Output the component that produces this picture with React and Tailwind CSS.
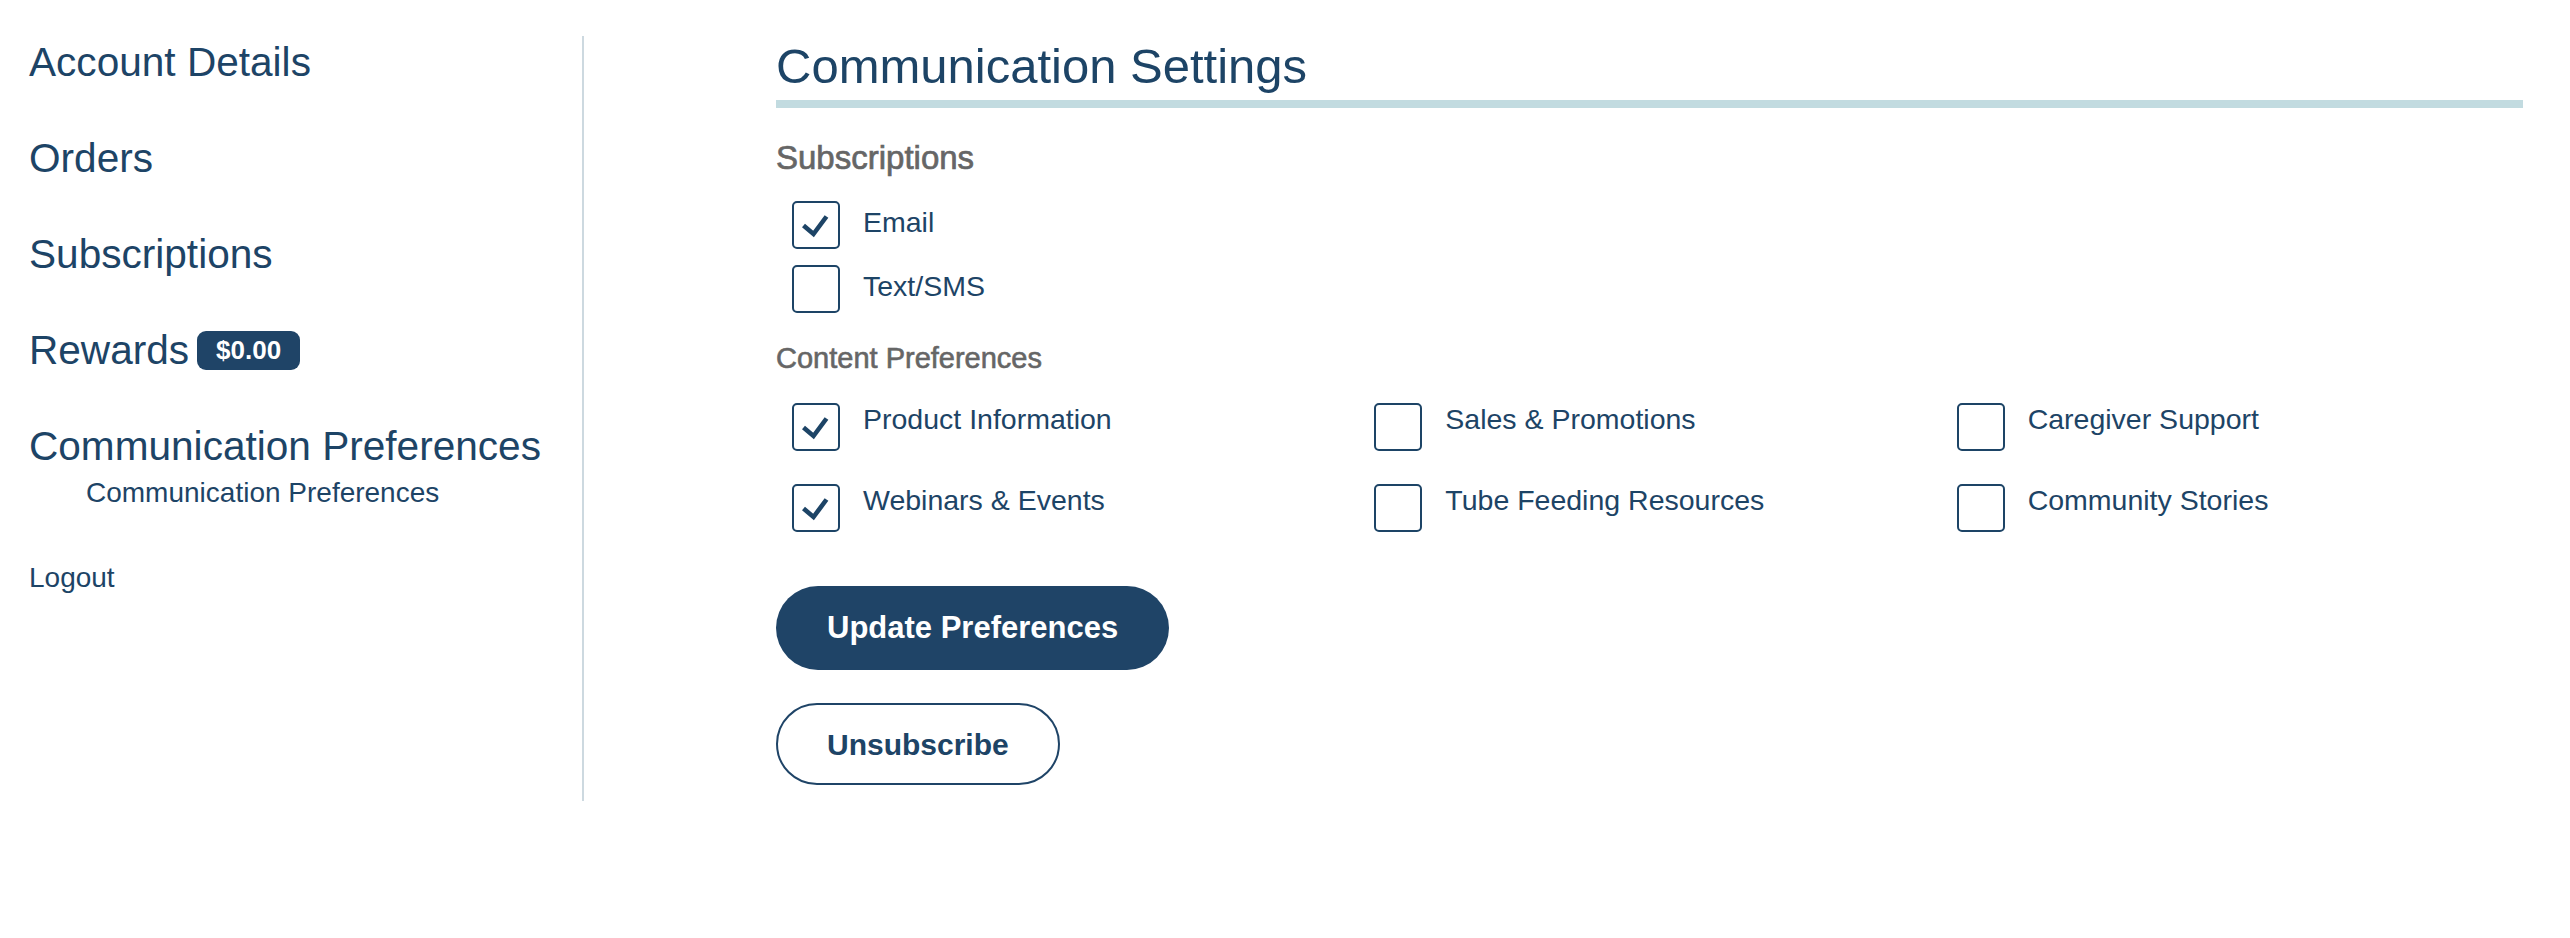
const navItems = ["Account Details", "Orders", "Subscriptions"];

const subscriptions = [
  { label: "Email", checked: true },
  { label: "Text/SMS", checked: false }
];

const contentPrefs = [
  { label: "Product Information", checked: true },
  { label: "Sales & Promotions", checked: false },
  { label: "Caregiver Support", checked: false },
  { label: "Webinars & Events", checked: true },
  { label: "Tube Feeding Resources", checked: false },
  { label: "Community Stories", checked: false }
];

function Checkbox({ checked }) {
  return (
    <span className="flex h-[48px] w-[48px] shrink-0 rounded-[5px] border-2 border-[#1d4466]">
      {checked && (
        <svg width="44" height="44" viewBox="0 0 44 44" fill="none" aria-hidden="true">
          <polyline points="9.5,22.5 19.5,31 32.5,13.5" stroke="#1d4466" strokeWidth="4.6" strokeLinejoin="miter" />
        </svg>
      )}
    </span>
  );
}

function Sidebar() {
  return (
    <aside className="mt-[36px] h-[765px] w-[584px] shrink-0 border-r-2 border-[#cdd9e0] pl-[29px]">
      <nav className="flex flex-col gap-[44px] text-[40.6px] leading-[52px]">
        {navItems.map((item) => (
          <a key={item} href="#" className="block">{item}</a>
        ))}
        <div className="flex items-center">
          <a href="#">Rewards</a>
          <span className="ml-[8px] flex h-[39px] w-[103px] items-center justify-center rounded-[9px] bg-[#1f4467] text-[26px] font-bold leading-none text-white">
            $0.00
          </span>
        </div>
        <div>
          <a href="#" className="block">Communication Preferences</a>
          <a href="#" className="block pl-[57px] text-[28px] leading-[42px]">Communication Preferences</a>
          <a href="#" className="mt-[43px] block text-[28px] leading-[42px]">Logout</a>
        </div>
      </nav>
    </aside>
  );
}

export default function App() {
  return (
    <div className="flex min-h-[938px] items-start bg-white font-['Liberation_Sans',Arial,sans-serif] text-[#1d4466]">
      <Sidebar />
      <main className="ml-[192px] w-[1747px] pt-[38px]">
        <h1 className="border-b-[8px] border-[#c2dbe0] pb-[6px] text-[49px] leading-[56px]">Communication Settings</h1>

        <h2 className="mt-[30px] text-[33px] leading-[40px] text-[#666666] [-webkit-text-stroke:0.7px_#666666]">Subscriptions</h2>
        <div className="mt-[23px] flex flex-col gap-[16px]">
          {subscriptions.map((opt) => (
            <label key={opt.label} className="flex items-center pl-[16px]">
              <Checkbox checked={opt.checked} />
              <span className="ml-[23px] pb-[6px] text-[28.5px] leading-[33px]">{opt.label}</span>
            </label>
          ))}
        </div>

        <h2 className="mt-[27px] text-[29px] leading-[36px] text-[#666666] [-webkit-text-stroke:0.6px_#666666]">Content Preferences</h2>
        <div className="mt-[27px] grid grid-cols-3 gap-y-[33px]">
          {contentPrefs.map((opt) => (
            <label key={opt.label} className="flex items-start pl-[16px]">
              <Checkbox checked={opt.checked} />
              <span className="ml-[23px] text-[28.5px] leading-[33px]">{opt.label}</span>
            </label>
          ))}
        </div>

        <div className="mt-[54px] flex flex-col items-start gap-[33px]">
          <button className="h-[84px] rounded-full bg-[#1f4467] px-[51px] text-[31px] font-bold text-white">
            Update Preferences
          </button>
          <button className="h-[82px] rounded-full border-2 border-[#1f4467] bg-white px-[49px] text-[30px] font-bold text-[#1d4466]">
            Unsubscribe
          </button>
        </div>
      </main>
    </div>
  );
}
